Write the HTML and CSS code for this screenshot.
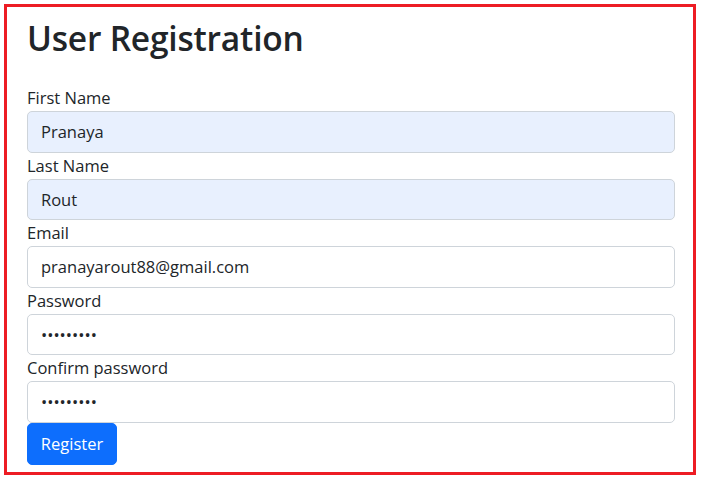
FILE: index.html
```html
<!DOCTYPE html>
<html lang="en">
<head>
<meta charset="utf-8">
<title>User Registration</title>
<link rel="stylesheet" href="styles.css">
</head>
<body>
<div class="frame">
  <h1 class="title">User Registration</h1>
  <form class="form">
    <div class="field">
      <label class="label" for="fn">First Name</label>
      <input class="control autofill" id="fn" type="text" value="Pranaya">
    </div>
    <div class="field">
      <label class="label" for="ln">Last Name</label>
      <input class="control autofill" id="ln" type="text" value="Rout">
    </div>
    <div class="field">
      <label class="label" for="em">Email</label>
      <input class="control" id="em" type="email" value="pranayarout88@gmail.com">
    </div>
    <div class="field">
      <label class="label" for="pw">Password</label>
      <input class="control" id="pw" type="password" value="123456789">
    </div>
    <div class="field">
      <label class="label" for="cpw">Confirm password</label>
      <input class="control" id="cpw" type="password" value="123456789">
    </div>
    <button class="btn" type="button">Register</button>
  </form>
</div>
</body>
</html>
```

FILE: styles.css
```css
* { box-sizing: border-box; }
html, body { margin: 0; padding: 0; background: #fff; }
body {
  padding: 4px 5px 5px 4px;
  font-family: "Open Sans", "Noto Sans", sans-serif;
  color: #212529;
}
.frame {
  border: 3px solid #ed1c24;
  height: 471px;
  padding: 0 18px 0 20px;
}
.title {
  margin: 0;
  padding-top: 6px;
  height: 78px;
  font-size: 33.5px;
  font-weight: 600;
  line-height: 50px;
  letter-spacing: -0.2px;
  color: #212529;
}
.form { display: flex; flex-direction: column; }
.field { display: flex; flex-direction: column; }
.label {
  font-size: 16.5px;
  line-height: 26px;
  height: 26px;
  padding-top: 0;
}
.control {
  display: block;
  width: 100%;
  height: 41.5px;
  padding: 0 13px;
  border: 1px solid #ced4da;
  border-radius: 5px;
  background: #fff;
  font-family: inherit;
  font-size: 16.5px;
  color: #212529;
  outline: none;
}
.autofill { background: #e8f0fe; }
.btn {
  align-self: flex-start;
  margin-top: 0;
  height: 42px;
  width: 90px;
  padding: 0;
  border: 1px solid #0d6efd;
  border-radius: 5px;
  background: #0d6efd;
  color: #fff;
  font-family: inherit;
  font-size: 16.5px;
}
```
